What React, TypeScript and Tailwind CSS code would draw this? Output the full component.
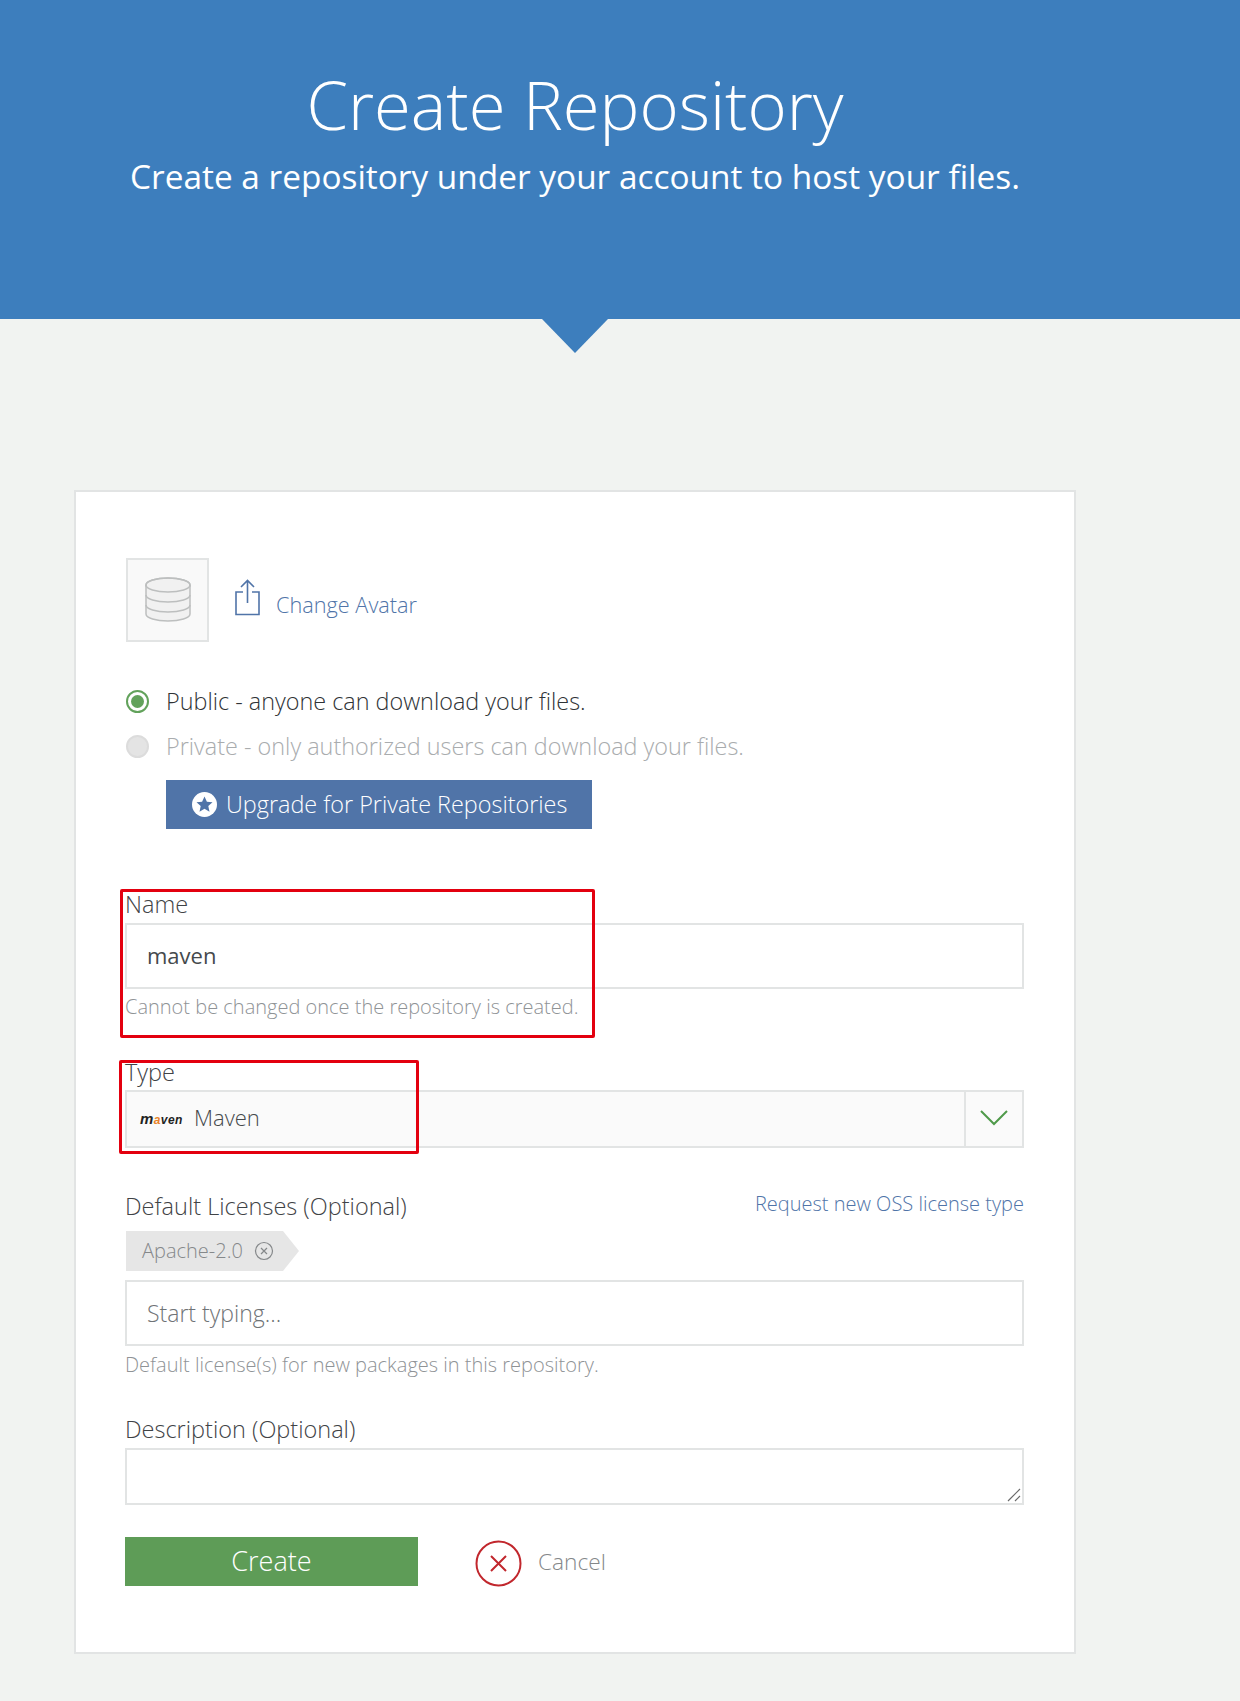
import React from 'react';

const labelClasses = "block text-[23.5px] leading-[28px] font-light text-[#3f4346]";
const helpClasses = "text-[20px] leading-[26px] font-light text-[#8f9396]";
const inputClasses = "block w-full h-[66px] border-2 border-[#e2e4e4] bg-white px-[20px] outline-none";

const DatabaseIcon = () => (
  <svg width="48" height="48" viewBox="0 0 48 48" fill="none" stroke="#bdbfbf" strokeWidth="1.5">
    <ellipse cx="24" cy="9" rx="22" ry="7" fill="#f1f1f1" />
    <path d="M2 9v29c0 4 10 7 22 7s22-3 22-7V9" fill="#f1f1f1" />
    <ellipse cx="24" cy="9" rx="22" ry="7" />
    <path d="M2 19c0 4 10 7 22 7s22-3 22-7M2 29c0 4 10 7 22 7s22-3 22-7" />
  </svg>
);

const UploadIcon = () => (
  <svg width="25" height="37" viewBox="0 0 25 37" fill="none" stroke="#5074a8" strokeWidth="1.6">
    <path d="M8 13H1v22.5h23V13h-7" />
    <path d="M12.5 24V1.5M6 8l6.5-6.5L19 8" />
  </svg>
);

const StarBadge = () => (
  <svg width="25" height="25" viewBox="0 0 25 25">
    <circle cx="12.5" cy="12.5" r="12.5" fill="#fff" />
    <path d="M12.5 4.5l2.4 5.2 5.6.6-4.2 3.8 1.2 5.6-5-2.9-5 2.9 1.2-5.6-4.2-3.8 5.6-.6z" fill="#5074a8" />
  </svg>
);

export default function App() {
  return (
    <div className="min-h-[1701px] bg-[#f1f3f1] font-['Open_Sans',sans-serif]">
      {/* Banner */}
      <div className="relative h-[319px] bg-[#3d7ebd] pr-[90px] pt-[64px] text-center text-white">
        <h1 className="text-[67px] leading-[80px] font-light">Create Repository</h1>
        <p className="mt-[9px] text-[33.4px] leading-[46px] font-medium">Create a repository under your account to host your files.</p>
        <svg className="absolute left-[542px] top-[319px]" width="66" height="34" viewBox="0 0 66 34">
          <path d="M0 0h66L33 34z" fill="#3d7ebd" />
        </svg>
      </div>

      {/* Card */}
      <div className="ml-[74px] mt-[171px] h-[1164px] w-[1002px] border-2 border-[#e2e4e4] bg-white pl-[49px] pr-[50px] pt-[66px]">
        <div className="flex h-[83px] items-start">
          <div className="ml-[1px] flex h-[84px] w-[83px] items-center justify-center border-2 border-[#e2e4e4] bg-[#f9f9f9]">
            <DatabaseIcon />
          </div>
          <div className="ml-[26px] mt-[21px]"><UploadIcon /></div>
          <a className="ml-[16px] mt-[32px] text-[21.7px] leading-[30px] font-light text-[#5074a8]">Change Avatar</a>
        </div>

        <div className="ml-[1px] mt-[44px] flex h-[32px] items-center">
          <span className="flex h-[23px] w-[23px] items-center justify-center rounded-full border-2 border-[#62a25b] bg-white">
            <span className="h-[13px] w-[13px] rounded-full bg-[#62a25b]" />
          </span>
          <span className="ml-[17px] mt-[2px] text-[23.4px] font-light text-[#2f3336]">Public - anyone can download your files.</span>
        </div>
        <div className="ml-[1px] mt-[13px] flex h-[32px] items-center">
          <span className="h-[23px] w-[23px] rounded-full border-2 border-[#dcdcdc] bg-[#e4e4e4]" />
          <span className="ml-[17px] mt-[2px] text-[23.4px] font-light text-[#a9acae]">Private - only authorized users can download your files.</span>
        </div>
        <button className="ml-[41px] mt-[18px] flex h-[49px] w-[426px] items-center bg-[#5074a8] pl-[26px] text-[23.4px] font-light text-white">
          <StarBadge />
          <span className="ml-[9px]">Upgrade for Private Repositories</span>
        </button>

        {/* Name */}
        <div className="relative mt-[61px]">
          <label className={labelClasses}>Name</label>
          <input readOnly value="maven" className={`${inputClasses} mt-[5px] pb-[2px] text-[22px] font-normal text-[#45494c]`} />
          <p className={`${helpClasses} mt-[5px]`}>Cannot be changed once the repository is created.</p>
          <div className="absolute left-[-5px] top-[-1px] h-[149px] w-[475px] rounded-[2px] border-[3px] border-[#e3000f]" />
        </div>

        {/* Type */}
        <div className="relative mt-[38px]">
          <label className={labelClasses}>Type</label>
          <div className="mt-[4px] flex h-[58px] items-stretch border-2 border-[#e2e4e4] bg-[#fafafa]">
            <div className="flex flex-1 items-center pb-[4px] pl-[13px]">
              <span className="mt-[5px] w-[43px] font-['Liberation_Sans',sans-serif] text-[12px] font-bold italic tracking-[0.4px] text-[#222]">
                <span className="text-[15px]">m</span><span className="text-[#e8832b]">a</span>ven
              </span>
              <span className="ml-[11px] text-[22px] font-light text-[#45494c]">Maven</span>
            </div>
            <div className="flex w-[58px] items-center justify-center border-l-2 border-[#e2e4e4] pb-[2px]">
              <svg width="28" height="16" viewBox="0 0 28 16" fill="none" stroke="#4f9a4a" strokeWidth="2">
                <path d="M1 1l13 13L27 1" />
              </svg>
            </div>
          </div>
          <div className="absolute left-[-6px] top-[2px] h-[94px] w-[300px] rounded-[2px] border-[3px] border-[#e3000f]" />
        </div>

        {/* Licenses */}
        <div className="mt-[44px] flex items-start justify-between">
          <label className={labelClasses}>Default Licenses (Optional)</label>
          <a className="mt-[-2px] text-[20px] leading-[28px] font-light text-[#5074a8]">Request new OSS license type</a>
        </div>
        <div className="ml-[1px] mt-[11px] flex h-[40px] w-[173px] items-stretch">
          <div className="flex w-[157px] items-center bg-[#e6e6e6] pl-[16px] text-[20px] font-light text-[#85888a]">
            Apache-2.0
            <svg className="ml-[11px]" width="20" height="20" viewBox="0 0 20 20" fill="none" stroke="#85888a" strokeWidth="1.2">
              <circle cx="10" cy="10" r="8.5" />
              <path d="M7 7l6 6M13 7l-6 6" />
            </svg>
          </div>
          <div className="h-0 w-0 border-y-[20px] border-l-[16px] border-y-transparent border-l-[#e6e6e6]" />
        </div>
        <input readOnly placeholder="Start typing..." className={`${inputClasses} mt-[9px] text-[23px] font-light placeholder:text-[#6f7376]`} />
        <p className={`${helpClasses} mt-[6px]`}>Default license(s) for new packages in this repository.</p>

        {/* Description */}
        <label className={`${labelClasses} mt-[37px]`}>Description (Optional)</label>
        <div className="relative mt-[5px] h-[57px] border-2 border-[#e2e4e4] bg-white">
          <svg className="absolute bottom-[1px] right-[1px]" width="14" height="14" viewBox="0 0 14 14" stroke="#6a6a6a" strokeWidth="1.2">
            <path d="M1 13L13 1M8 13l5-5" />
          </svg>
        </div>

        {/* Actions */}
        <div className="mt-[32px] flex h-[49px] items-center">
          <button className="h-[49px] w-[293px] bg-[#5e9c57] text-[27px] font-light text-white">Create</button>
          <svg className="ml-[57px] mt-[4px]" width="47" height="47" viewBox="0 0 47 47" fill="none" stroke="#c1272d">
            <circle cx="23.5" cy="23.5" r="22" strokeWidth="2" />
            <path d="M16 16l15 15M31 16L16 31" strokeWidth="2" />
          </svg>
          <span className="ml-[16px] mt-[2px] text-[22.7px] font-light text-[#85888a]">Cancel</span>
        </div>
      </div>
    </div>
  );
}
